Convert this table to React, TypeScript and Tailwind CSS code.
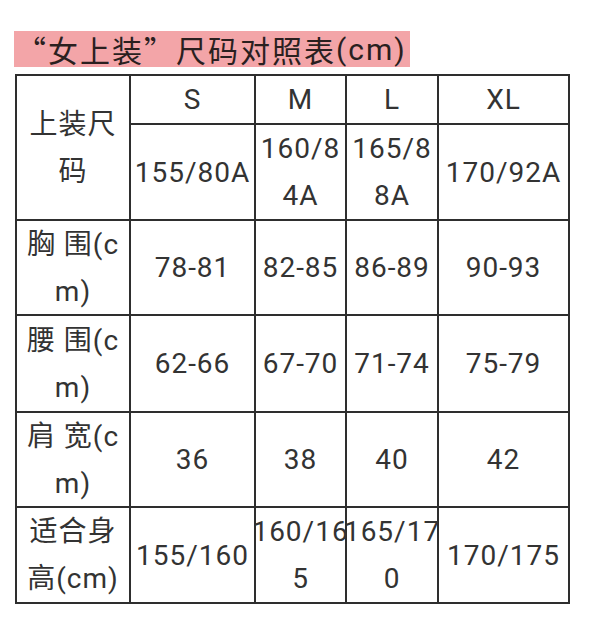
const cols = ["S", "M", "L", "XL"];

const rows: { label: string[]; cells: string[][] }[] = [
  { label: ["胸 围(c", "m)"], cells: [["78-81"], ["82-85"], ["86-89"], ["90-93"]] },
  { label: ["腰 围(c", "m)"], cells: [["62-66"], ["67-70"], ["71-74"], ["75-79"]] },
  { label: ["肩 宽(c", "m)"], cells: [["36"], ["38"], ["40"], ["42"]] },
  {
    label: ["适合身", "高(cm)"],
    cells: [["155/160"], ["160/16", "5"], ["165/17", "0"], ["170/175"]],
  },
];

const sizeCodes = [["155/80A"], ["160/8", "4A"], ["165/8", "8A"], ["170/92A"]];

function Cell({ lines, className = "" }: { lines: string[]; className?: string }) {
  return (
    <div
      className={`flex flex-col items-center justify-center bg-white whitespace-nowrap leading-[47px] ${className}`}
    >
      {lines.map((line, i) => (
        <span key={i}>{line}</span>
      ))}
    </div>
  );
}

export default function App() {
  const cjk = { fontFamily: '"Noto Sans CJK SC", sans-serif' };
  return (
    <div
      className="min-h-[618px] w-[600px] bg-white pl-[14px] pt-[31px] text-[#333333]"
      style={{ fontFamily: 'Roboto, "Noto Sans CJK SC", sans-serif' }}
    >
      <div className="flex h-[36px] w-[396px] items-center bg-[#f3a5a8] pl-[2px] text-[30px] tracking-[2px] text-[#2a1f1f]">
        <span style={cjk}>“女上装”尺码对照表</span>
        <span>(cm)</span>
      </div>

      <div className="ml-[1px] mt-[7px] grid w-fit grid-cols-[112px_123px_89px_90px_129px] grid-rows-[47px_94px_93px_95px_93px_94px] gap-[2px] bg-[#2e2e2e] p-[2px] text-[28px] tracking-[1px]">
        <Cell lines={["上装尺", "码"]} className="row-span-2" />
        {cols.map((c) => (
          <Cell key={c} lines={[c]} />
        ))}
        {sizeCodes.map((lines, i) => (
          <Cell key={i} lines={lines} />
        ))}
        {rows.map((row, r) => (
          <div key={r} className="contents">
            <Cell lines={row.label} />
            {row.cells.map((lines, i) => (
              <Cell key={i} lines={lines} />
            ))}
          </div>
        ))}
      </div>
    </div>
  );
}
